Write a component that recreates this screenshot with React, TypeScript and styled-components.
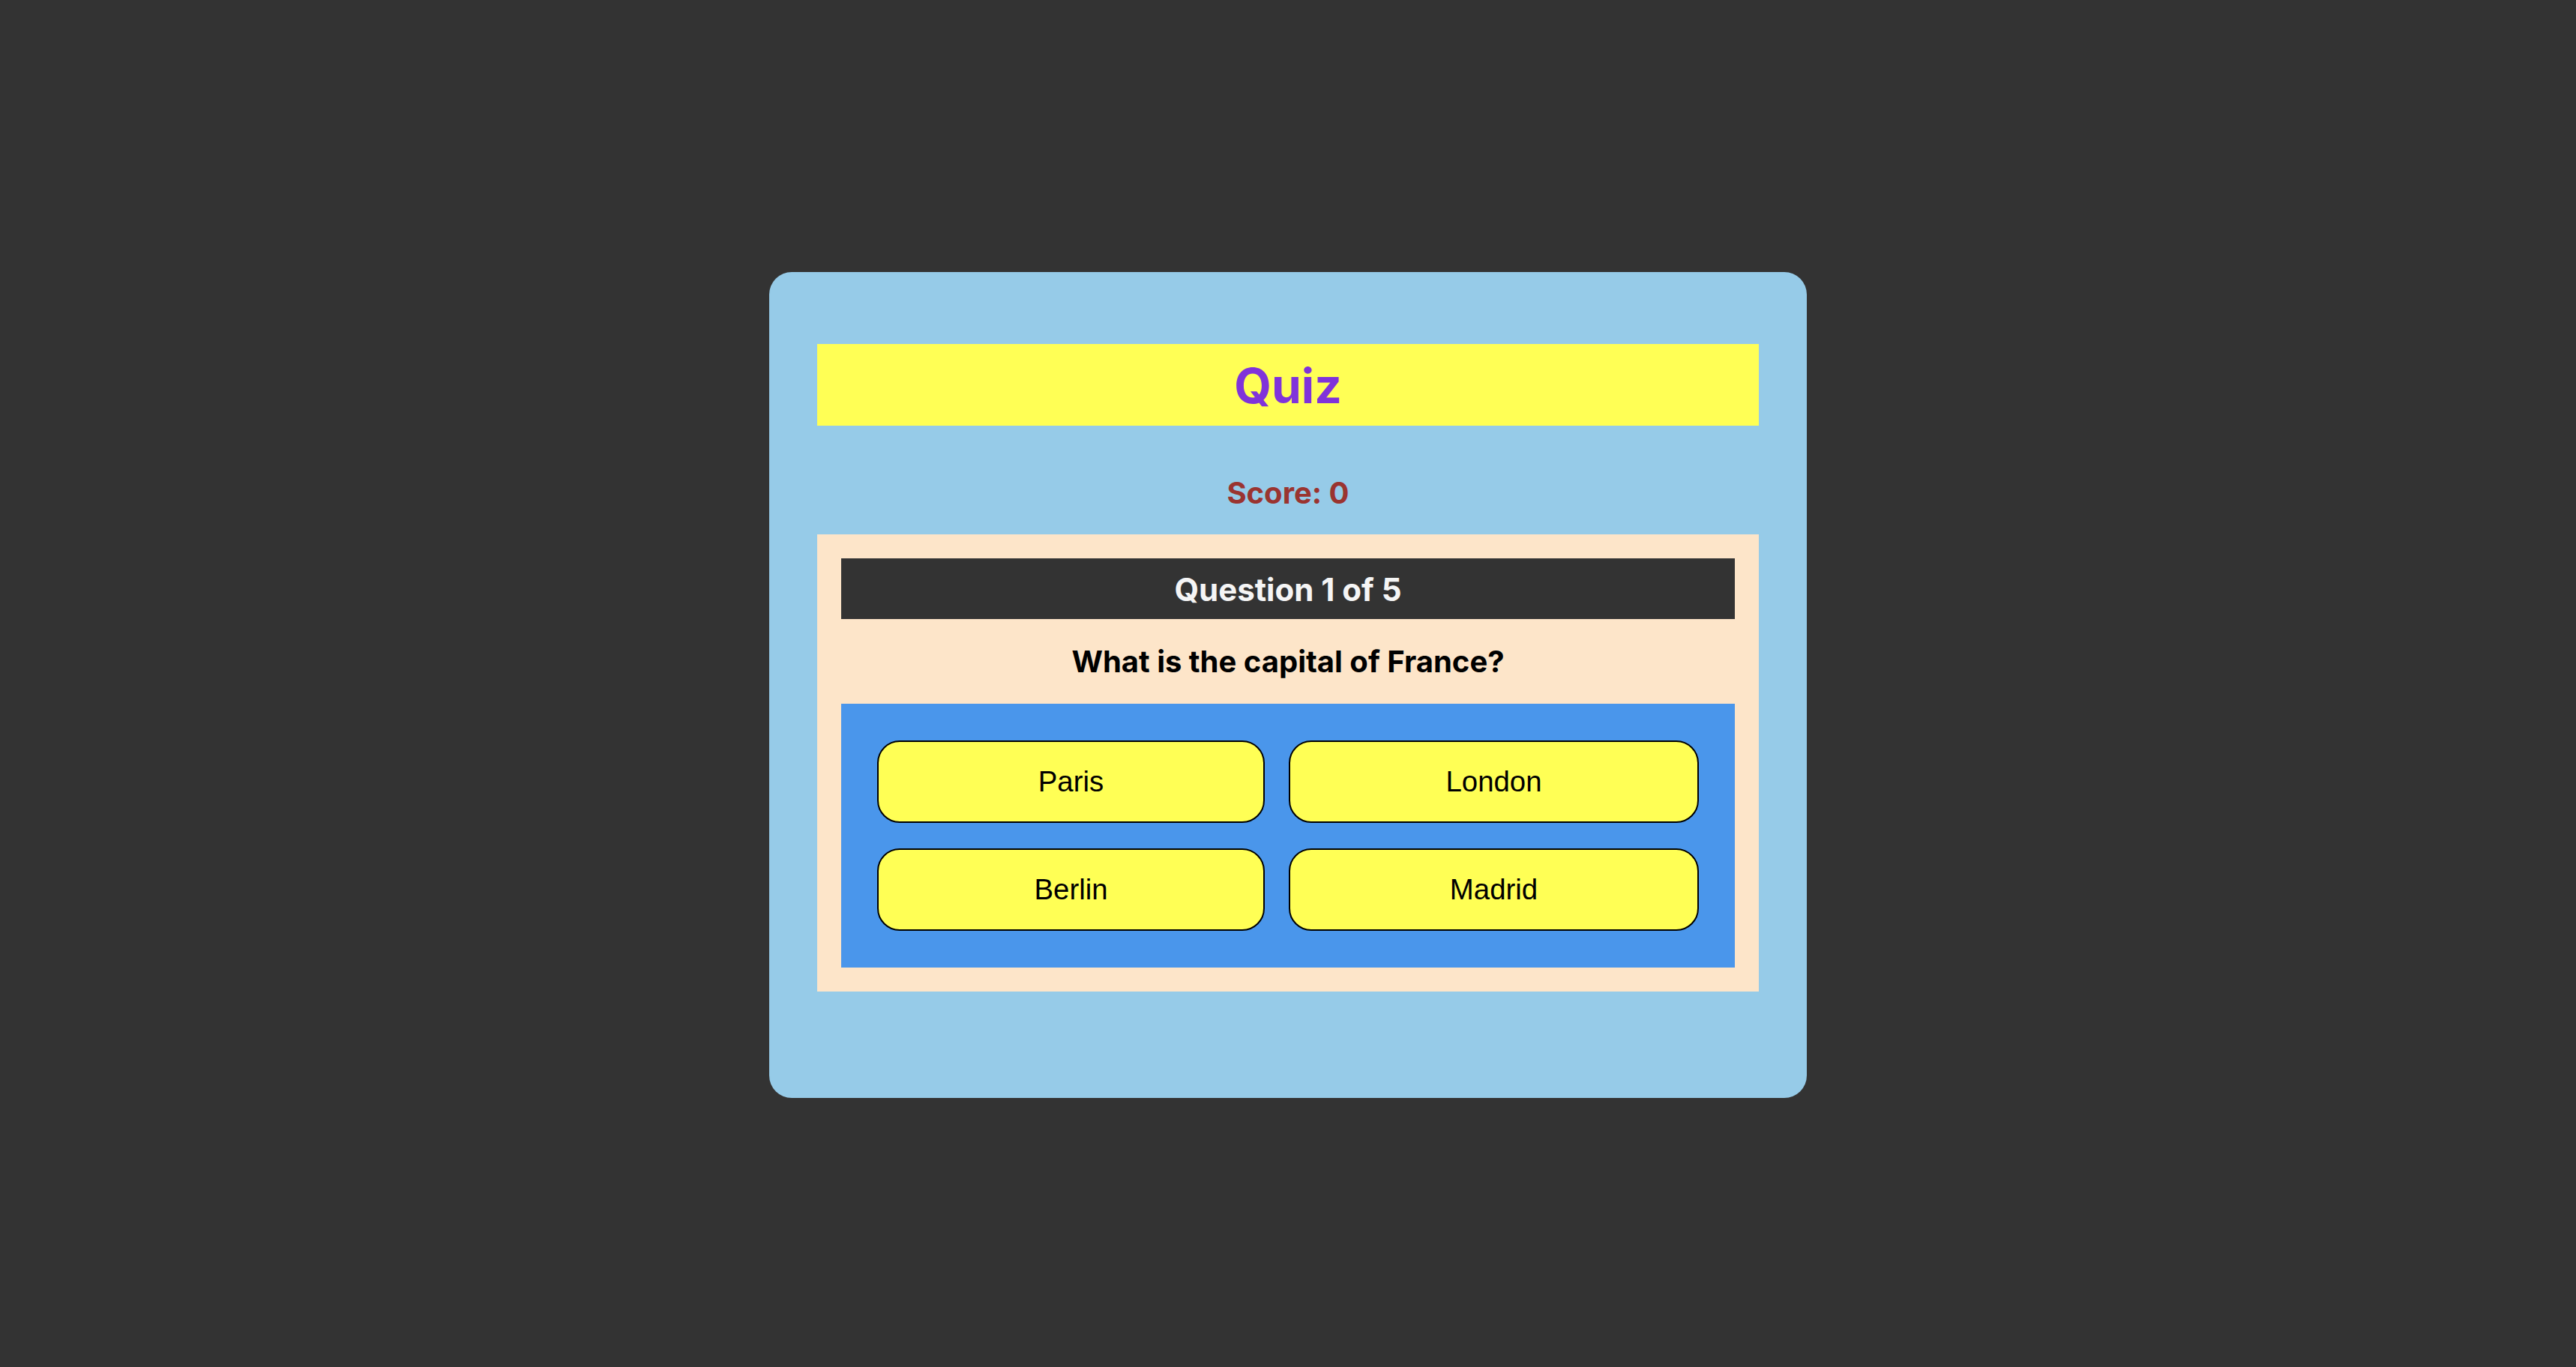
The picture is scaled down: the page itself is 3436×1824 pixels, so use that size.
import styled, { createGlobalStyle } from 'styled-components';

const GlobalStyle = createGlobalStyle`
  html, body {
    margin: 0;
    padding: 0;
    background: #333333;
  }

  body {
    font-family: Inter, 'Noto Sans', sans-serif;
  }
`;

const Page = styled.div`
  min-height: 100vh;
  box-sizing: border-box;
  padding-top: 3px;
  display: flex;
  align-items: center;
  justify-content: center;
`;

const Card = styled.div`
  width: 1384px;
  box-sizing: border-box;
  padding: 96px 64px 142px;
  background: #96cbe8;
  border-radius: 30px;
  display: flex;
  flex-direction: column;
`;

const Title = styled.h1`
  margin: 0;
  padding: 17px 0 14px;
  background: #ffff55;
  color: #8033da;
  font-size: 64px;
  line-height: 78px;
  font-weight: 700;
  text-align: center;
`;

const Score = styled.div`
  margin: 66px 0 31px;
  color: #9a3430;
  font-size: 40px;
  line-height: 48px;
  font-weight: 700;
  text-align: center;
`;

const QuestionBox = styled.section`
  background: #fde5c9;
  padding: 32px;
`;

const QuestionHeader = styled.div`
  background: #333333;
  color: #f5f5f5;
  font-size: 42px;
  line-height: 49px;
  font-weight: 700;
  text-align: center;
  padding: 17px 0 15px;
`;

const QuestionText = styled.h2`
  margin: 32px 0;
  color: #000;
  font-size: 40px;
  line-height: 49px;
  font-weight: 700;
  text-align: center;
`;

const Answers = styled.div`
  background: #4a96eb;
  padding: 49px 48px;
  display: grid;
  grid-template-columns: auto auto;
  column-gap: 32px;
  row-gap: 34px;
`;

const AnswerButton = styled.button`
  background: #ffff55;
  color: #000;
  border: 2px solid #000;
  border-radius: 30px;
  padding: 31px 40px;
  font-family: 'Liberation Sans', Arial, sans-serif;
  font-size: 38.4px;
  line-height: 44px;
  text-align: center;
  cursor: pointer;
`;

const answers = ['Paris', 'London', 'Berlin', 'Madrid'];

const App = () => (
  <>
    <GlobalStyle />
    <Page>
      <Card>
        <Title>Quiz</Title>
        <Score>Score: 0</Score>
        <QuestionBox>
          <QuestionHeader>Question 1 of 5</QuestionHeader>
          <QuestionText>What is the capital of France?</QuestionText>
          <Answers>
            {answers.map((a) => (
              <AnswerButton key={a}>{a}</AnswerButton>
            ))}
          </Answers>
        </QuestionBox>
      </Card>
    </Page>
  </>
);

export default App;
